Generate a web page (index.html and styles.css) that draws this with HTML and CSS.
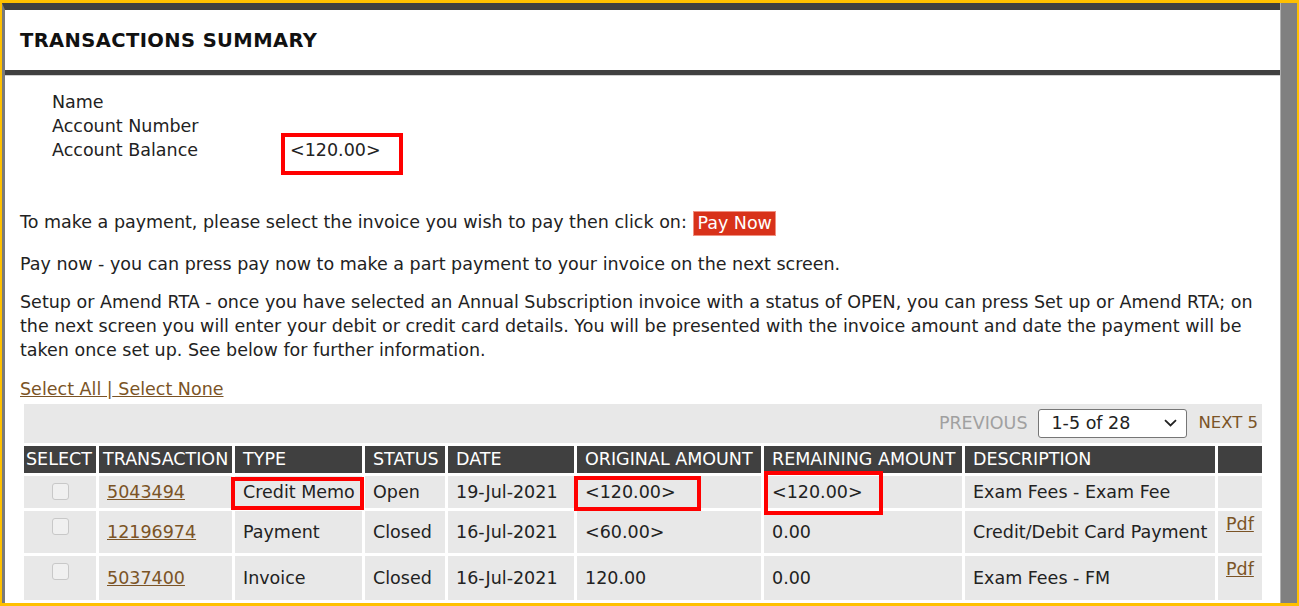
FILE: index.html
```html
<!DOCTYPE html>
<html lang="en">
<head>
  <meta charset="UTF-8">
  <meta name="viewport" content="width=device-width, initial-scale=1.0">
  <title>Transactions Summary</title>
  <link rel="stylesheet" href="styles.css">
</head>
<body>
  <div class="frame">
    <div class="page">
      <div class="title-bar">
        <h1>TRANSACTIONS SUMMARY</h1>
      </div>

      <div class="account">
        <div class="account-row"><span class="label">Name</span><span class="value"></span></div>
        <div class="account-row"><span class="label">Account Number</span><span class="value"></span></div>
        <div class="account-row"><span class="label">Account Balance</span><span class="value"><span class="mark mark-balance">&lt;120.00&gt;</span></span></div>
      </div>

      <p class="intro">To make a payment, please select the invoice you wish to pay then click on: <button class="btn-pay">Pay Now</button></p>
      <p class="note">Pay now - you can press pay now to make a part payment to your invoice on the next screen.</p>
      <p class="note">Setup or Amend RTA - once you have selected an Annual Subscription invoice with a status of OPEN, you can press Set up or Amend RTA; on the next screen you will enter your debit or credit card details. You will be presented with the invoice amount and date the payment will be taken once set up. See below for further information.</p>

      <div class="select-links"><a href="#">Select All |</a><a href="#"> Select None</a></div>

      <table class="tx">
        <colgroup>
          <col style="width:72px">
          <col style="width:133px">
          <col style="width:127px">
          <col style="width:80px">
          <col style="width:126px">
          <col style="width:184px">
          <col style="width:198px">
          <col style="width:250px">
          <col style="width:44px">
        </colgroup>
        <tr class="toolbar">
          <td colspan="9">
            <div class="pager">
              <span class="prev">PREVIOUS</span>
              <div class="pager-select">
                <span>1-5 of 28</span>
                <svg width="13" height="8" viewBox="0 0 13 8"><path d="M1 1.2 L6.5 6.5 L12 1.2" fill="none" stroke="#222" stroke-width="1.8"/></svg>
              </div>
              <a class="next" href="#">NEXT 5</a>
            </div>
          </td>
        </tr>
        <tr class="head">
          <th class="th-select">SELECT</th>
          <th class="th-tx">TRANSACTION</th>
          <th>TYPE</th>
          <th>STATUS</th>
          <th>DATE</th>
          <th>ORIGINAL AMOUNT</th>
          <th>REMAINING AMOUNT</th>
          <th>DESCRIPTION</th>
          <th></th>
        </tr>
        <tr class="r1">
          <td class="chk"><span class="box"></span></td>
          <td><a href="#">5043494</a></td>
          <td><span class="mark mark-type">Credit Memo</span></td>
          <td>Open</td>
          <td>19-Jul-2021</td>
          <td><span class="mark mark-orig">&lt;120.00&gt;</span></td>
          <td><span class="mark mark-rem">&lt;120.00&gt;</span></td>
          <td>Exam Fees - Exam Fee</td>
          <td class="doc"></td>
        </tr>
        <tr class="r2">
          <td class="chk"><span class="box"></span></td>
          <td><a href="#">12196974</a></td>
          <td>Payment</td>
          <td>Closed</td>
          <td>16-Jul-2021</td>
          <td>&lt;60.00&gt;</td>
          <td>0.00</td>
          <td>Credit/Debit Card Payment</td>
          <td class="doc"><a href="#">Pdf</a></td>
        </tr>
        <tr class="r3">
          <td class="chk"><span class="box"></span></td>
          <td><a href="#">5037400</a></td>
          <td>Invoice</td>
          <td>Closed</td>
          <td>16-Jul-2021</td>
          <td>120.00</td>
          <td>0.00</td>
          <td>Exam Fees - FM</td>
          <td class="doc"><a href="#">Pdf</a></td>
        </tr>
      </table>
    </div>
    <div class="scroll"></div>
  </div>
</body>
</html>
```

FILE: styles.css
```css
* { box-sizing: border-box; }
html, body { margin: 0; padding: 0; }
body { font-family: "DejaVu Sans", Verdana, sans-serif; font-size: 17.5px; color: #222; background: #fff; }
a { color: #7b5426; }

.frame { height: 606px; overflow: hidden; display: flex; border: 2px solid #ffc000; border-top-width: 3px; border-bottom-width: 3px; }
.page { flex: 1; border-left: 3px solid #7a7a7a; border-top: 7px solid #404040; overflow: hidden; }
.scroll { width: 17px; background: #808080; border-left: 1px solid #b0b0b0; }

.title-bar { height: 65px; border-bottom: 5px solid #404040; box-shadow: 0 1px 0 #d0d0d0; display: flex; align-items: center; padding-left: 15px; }
.title-bar h1 { margin: 0; font-size: 19.5px; font-weight: bold; color: #111; letter-spacing: 0.4px; }

.account { margin-top: 15px; padding-left: 47px; line-height: 24px; }
.account-row { display: flex; }
.account-row .label { width: 238px; }

.mark { position: relative; display: inline-block; }
.mark::after { content: ""; position: absolute; border: 4px solid #f00; }
.mark-balance::after { left: -9px; right: -22px; top: -5px; bottom: -13px; }
.mark-type::after { left: -12px; right: -9px; top: -3px; bottom: -6px; }
.mark-orig::after { left: -11px; right: -25px; top: -4px; bottom: -7px; }
.mark-rem::after { left: -8px; right: -20px; top: -9px; bottom: -11px; }

p { margin: 0; padding: 0 15px; line-height: 24px; }
.intro { margin-top: 48px; }
.note { margin-top: 16px; }
.note + .note { margin-top: 14px; }
.btn-pay { font: inherit; color: #fff; background: #d8321a; border: 1px solid #f09080; padding: 0 3px; height: 25px; line-height: 22px; margin-left: 1px; vertical-align: middle; cursor: pointer; }

.select-links { margin-top: 15px; padding-left: 15px; line-height: 24px; }
.select-links a { color: #7b5426; }

.tx { margin-top: 0; margin-left: 16px; width: 1244px; table-layout: fixed; border-collapse: separate; border-spacing: 3px; }
.tx td, .tx th { padding: 0 8px; vertical-align: middle; line-height: 24px; white-space: nowrap; }
.tx td { background: #e8e8e8; }
.toolbar td { height: 39px; padding: 0 4px 0 0; }
.pager { display: flex; justify-content: flex-end; align-items: center; gap: 11px; }
.prev { color: #a0a0a0; }
.next { color: #7b5426; text-decoration: none; font-size: 16.5px; }
.pager-select { width: 149px; height: 29px; background: #fff; border: 1px solid #767676; border-radius: 3px; display: flex; align-items: center; justify-content: space-between; padding: 0 9px 0 12px; color: #222; }
.head th { height: 27px; background: #404040; color: #fff; font-weight: normal; text-align: left; overflow: hidden; }
.head .th-select { padding: 0 2px; }
.head .th-tx { padding: 0 4px; }
.r1 td { height: 32px; }
.r2 td { height: 42px; }
.r3 td { height: 44px; }
.tx td.chk { vertical-align: top; text-align: center; padding-top: 7px; }
.box { display: inline-block; width: 17px; height: 17px; border: 1px solid #c8c8c8; border-radius: 3px; background: #f0f0f0; vertical-align: top; }
.tx td.doc { vertical-align: top; padding-top: 1px; }
```
